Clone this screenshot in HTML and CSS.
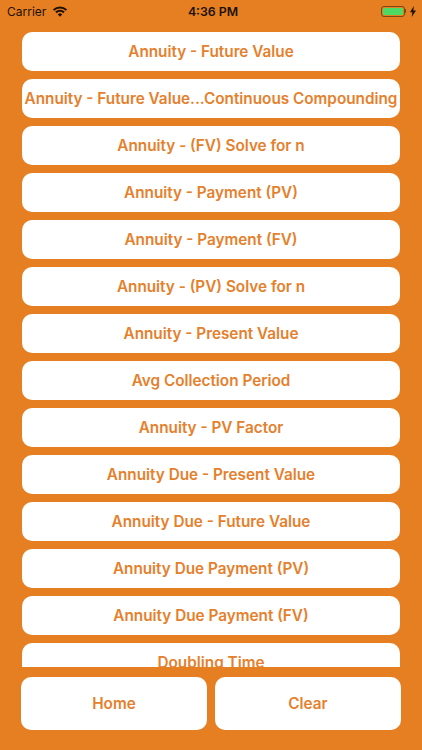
FILE: index.html
```html
<!DOCTYPE html>
<html lang="en">
<head>
<meta charset="utf-8">
<title>Annuity Formulas</title>
<link rel="stylesheet" href="styles.css">
</head>
<body>
<div class="status">
  <div class="status-left">
    <span>Carrier</span>
    <svg class="wifi" viewBox="0 0 14 11" width="14" height="11"><path class="wifi-arc" d="M.64 4.140A9 9 0 0 1 13.360 4.140"/><path class="wifi-arc" d="M2.970 6.470A5.700 5.700 0 0 1 11.030 6.470"/><path class="wifi-dot" d="M7 10.700 4.800 8.400A3.100 3.100 0 0 1 9.200 8.400Z"/></svg>
  </div>
  <div class="status-time">4:36 PM</div>
  <div class="status-right">
    <div class="battery"><div class="battery-fill"></div></div>
    <div class="battery-cap"></div>
    <svg class="bolt" viewBox="0 0 6 11" width="6" height="11"><path d="M3.800 0 0 6.200h2.400L1.700 11 6 4.500H3.400z"/></svg>
  </div>
</div>
<div class="list">
  <button class="item">Annuity - Future Value</button>
  <button class="item">Annuity - Future Value...Continuous Compounding</button>
  <button class="item">Annuity - (FV) Solve for n</button>
  <button class="item">Annuity - Payment (PV)</button>
  <button class="item">Annuity - Payment (FV)</button>
  <button class="item">Annuity - (PV) Solve for n</button>
  <button class="item">Annuity - Present Value</button>
  <button class="item">Avg Collection Period</button>
  <button class="item">Annuity - PV Factor</button>
  <button class="item">Annuity Due - Present Value</button>
  <button class="item">Annuity Due - Future Value</button>
  <button class="item">Annuity Due Payment (PV)</button>
  <button class="item">Annuity Due Payment (FV)</button>
  <button class="item">Doubling Time</button>
</div>
<div class="footer">
  <button class="foot-btn">Home</button>
  <button class="foot-btn">Clear</button>
</div>
</body>
</html>
```
FILE: styles.css
```css
* { box-sizing: border-box; }
html, body { margin: 0; padding: 0; }
body {
  width: 422px;
  height: 750px;
  overflow: hidden;
  background: #e67e22;
  font-family: Inter, "Liberation Sans", sans-serif;
  display: flex;
  flex-direction: column;
}
.status {
  height: 32px;
  flex: none;
  padding: 0 6px 10px 7px;
  display: grid;
  grid-template-columns: 1fr auto 1fr;
  align-items: center;
  font-size: 12px;
  color: #1d1206;
}
.status-left { display: flex; align-items: center; gap: 7px; }
.wifi { display: block; }
.wifi-arc { fill: none; stroke: #1d1206; stroke-width: 2; }
.wifi-dot { fill: #1d1206; }
.status-time { font-weight: 600; font-size: 12.300px; margin-left: 3px; }
.status-right { display: flex; align-items: center; justify-content: flex-end; }
.battery {
  width: 24px;
  height: 11px;
  border: 1px solid #7a4a14;
  border-radius: 3px;
  padding: 1px;
}
.battery-fill { width: 100%; height: 100%; background: #4cd964; border-radius: 1px; }
.battery-cap { width: 1.500px; height: 4px; background: #7a4a14; margin-right: 4px; }
.bolt { fill: #1d1206; }
.list {
  height: 635px;
  flex: none;
  overflow: hidden;
  padding: 0 22px;
  display: flex;
  flex-direction: column;
  gap: 8px;
}
.item {
  flex: none;
  height: 39px;
  width: 100%;
  padding: 0;
  border: 0;
  border-radius: 10px;
  background: #fff;
  color: #e5802c;
  font: 600 15.300px Inter, "Liberation Sans", sans-serif;
  white-space: nowrap;
  text-align: center;
}
.footer {
  padding: 10px 21px 0;
  display: grid;
  grid-template-columns: 186px 186px;
  gap: 8px;
}
.foot-btn {
  height: 53px;
  padding: 0;
  border: 0;
  border-radius: 10px;
  background: #fff;
  color: #e5802c;
  font: 600 15.300px Inter, "Liberation Sans", sans-serif;
}
```
